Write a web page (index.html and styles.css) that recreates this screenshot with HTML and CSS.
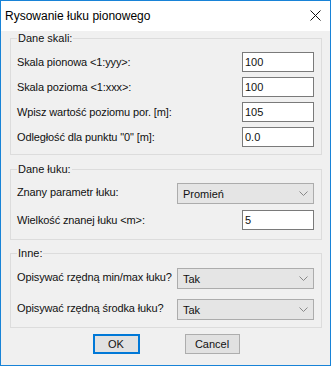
FILE: index.html
```html
<!DOCTYPE html>
<html lang="pl">
<head>
<meta charset="UTF-8">
<title>Rysowanie łuku pionowego</title>
<link rel="stylesheet" href="styles.css">
</head>
<body>

<div class="window">
  <div class="titlebar">
    <span class="title">Rysowanie łuku pionowego</span>
    <svg class="close" width="11" height="11" viewBox="0 0 11 11"><path d="M0.5 0.5 L10.5 10.5 M10.5 0.5 L0.5 10.5" stroke="#111" stroke-width="1" fill="none"/></svg>
  </div>

  <div class="content">
    <fieldset class="group g1">
      <legend>Dane skali:</legend>
      <div class="row"><span>Skala pionowa &lt;1:yyy&gt;:</span><div class="edit">100</div></div>
      <div class="row"><span>Skala pozioma &lt;1:xxx&gt;:</span><div class="edit">100</div></div>
      <div class="row"><span>Wpisz wartość poziomu por. [m]:</span><div class="edit">105</div></div>
      <div class="row"><span>Odległość dla punktu "0" [m]:</span><div class="edit">0.0</div></div>
    </fieldset>

    <fieldset class="group g2">
      <legend>Dane łuku:</legend>
      <div class="row sel-row"><span>Znany parametr łuku:</span><div class="combo">Promień<svg width="9" height="5" viewBox="0 0 9 5"><path d="M0.5 0.5 L4.5 4.5 L8.5 0.5" stroke="#888" fill="none"/></svg></div></div>
      <div class="row"><span>Wielkość znanej łuku &lt;m&gt;:</span><div class="edit">5</div></div>
    </fieldset>

    <fieldset class="group g3">
      <legend>Inne:</legend>
      <div class="row sel-row"><span>Opisywać rzędną min/max łuku?</span><div class="combo">Tak<svg width="9" height="5" viewBox="0 0 9 5"><path d="M0.5 0.5 L4.5 4.5 L8.5 0.5" stroke="#888" fill="none"/></svg></div></div>
      <div class="row sel-row"><span>Opisywać rzędną środka łuku?</span><div class="combo">Tak<svg width="9" height="5" viewBox="0 0 9 5"><path d="M0.5 0.5 L4.5 4.5 L8.5 0.5" stroke="#888" fill="none"/></svg></div></div>
    </fieldset>

    <div class="buttons">
      <div class="btn default">OK</div>
      <div class="btn">Cancel</div>
    </div>
  </div>
</div>

</body>
</html>
```

FILE: styles.css
```css
* { margin: 0; padding: 0; box-sizing: border-box; }
body { font-family: 'Liberation Sans', Arial, sans-serif; font-size: 11px; color: #111; background: #fff; }
.window { width: 331px; height: 366px; border: 1px solid #1883d7; background: #f0f0f0; display: flex; flex-direction: column; }
.titlebar { height: 30px; background: #fff; display: flex; align-items: center; justify-content: space-between; padding: 0 9px 0 4px; }
.title { font-family: 'Liberation Sans', sans-serif; font-size: 12px; color: #000; }
.close { margin-top: -1px; }
.content { display: flex; flex-direction: column; padding: 0 8px 0 9px; }
.group { border: 1px solid #dcdcdc; padding: 7px 7px 7px 6px; display: flex; flex-direction: column; }
.group legend { font-size: 11px; line-height: 14px; padding: 0 1px; margin-left: 0; }
.g1 { gap: 5px; }
.g2 { margin-top: 7px; gap: 6px; padding-bottom: 9px; }
.g3 { margin-top: 6px; gap: 10px; padding-top: 8px; }
.row { display: flex; justify-content: space-between; align-items: center; }
.row span { letter-spacing: -0.12px; }
.edit { width: 72px; height: 20px; background: #fff; border: 1px solid #7a7a7a; padding-left: 2px; line-height: 18px; }
.combo { width: 137px; height: 21px; background: #e5e5e5; border: 1px solid #acacac; padding: 0 5px 0 5px; display: flex; align-items: center; justify-content: space-between; }
.sel-row span { margin-top: -3px; }
.buttons { display: flex; justify-content: center; gap: 45px; margin-top: 6px; }
.btn { height: 20px; background: #e1e1e1; border: 1px solid #adadad; display: flex; align-items: center; justify-content: center; }
.btn.default { width: 47px; border: 2px solid #0078d7; }
.btn:not(.default) { width: 55px; }
```
